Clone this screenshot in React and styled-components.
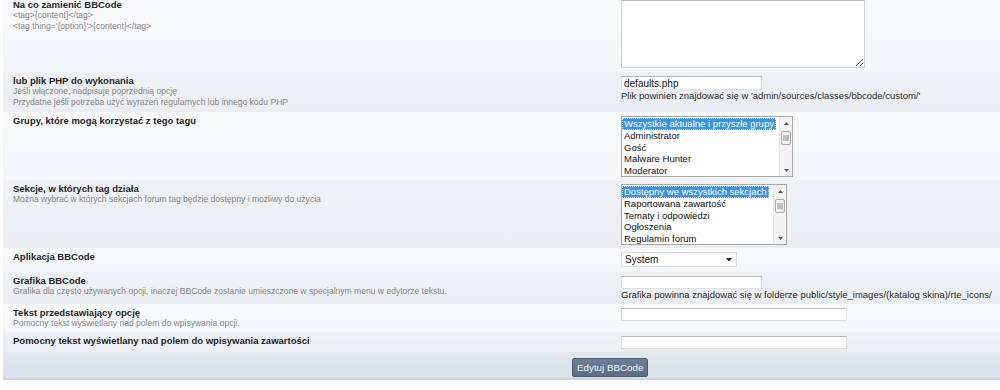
import styled, { createGlobalStyle } from "styled-components";

const GlobalStyle = createGlobalStyle`
  body {
    margin: 0;
    background: #ffffff;
    font-family: "Liberation Sans", Arial, sans-serif;
  }
`;

const Form = styled.div`
  margin-left: 3px;
  border-bottom: 2px solid #cdd5de;
`;

const Row = styled.div`
  display: grid;
  grid-template-columns: 618px 1fr;
  height: ${(p) => p.$h}px;
  padding-top: ${(p) => (p.$top !== undefined ? p.$top : 4)}px;
  box-sizing: border-box;
  background: ${(p) =>
    p.$alt
      ? "linear-gradient(#eef1f5, #eaeef3)"
      : "linear-gradient(#f8fafc, #f4f7fa)"};
  overflow: hidden;
`;

const Label = styled.div`
  padding-left: 10px;
`;

const Title = styled.div`
  font-size: 9.5px;
  line-height: 10px;
  font-weight: bold;
  color: #1f1f1f;
`;

const Desc = styled.div`
  font-size: 8.55px;
  line-height: 10.5px;
  color: #888888;
`;

const Value = styled.div`
  display: flex;
  flex-direction: column;
  align-items: flex-start;
`;

const TextArea = styled.textarea`
  width: 244px;
  height: 68px;
  box-sizing: border-box;
  border: 1px solid #d2d2d2;
  border-top-color: #b8b8b8;
  background: #ffffff;
  resize: both;
  margin: 0;
  padding: 2px;
  font-family: inherit;
  font-size: 10px;
`;

const TextInput = styled.input`
  width: ${(p) => p.$w}px;
  height: ${(p) => p.$h || 14}px;
  box-sizing: border-box;
  border: 1px solid #dedede;
  border-top-color: #b9b9b9;
  background: #ffffff;
  margin: 0;
  padding: 0 2px;
  font-family: inherit;
  font-size: 10px;
  color: #111;
  outline: none;
`;

const Hint = styled.div`
  font-size: 9.5px;
  line-height: 11px;
  color: #2b2b2b;
  white-space: nowrap;
`;

const ListBox = styled.div`
  width: ${(p) => p.$w}px;
  height: 61px;
  box-sizing: border-box;
  border: 1px solid #a9a9a9;
  background: #ffffff;
  display: flex;
`;

const Options = styled.div`
  flex: 1;
  padding-top: 1px;
  display: flex;
  flex-direction: column;
  align-items: flex-start;
  min-width: 0;
`;

const Option = styled.div`
  height: 11.8px;
  line-height: 11.8px;
  font-size: 9.5px;
  padding: 0 2px;
  white-space: nowrap;
  color: ${(p) => (p.$selected ? "#ffffff" : "#111111")};
  background: ${(p) => (p.$selected ? "#3b93e6" : "transparent")};
  outline: ${(p) => (p.$selected ? "1px dotted #cfe3f7" : "none")};
  outline-offset: -1px;
`;

const ScrollBar = styled.div`
  width: 12px;
  background: #f3f3f3;
  border-left: 1px solid #e4e4e4;
  display: flex;
  flex-direction: column;
  align-items: center;
`;

const Arrow = styled.div`
  height: 12px;
  width: 100%;
  display: flex;
  align-items: center;
  justify-content: center;
`;

const Track = styled.div`
  flex: 1;
  width: 100%;
  display: flex;
  justify-content: center;
`;

const Thumb = styled.div`
  margin-top: 2px;
  width: 8px;
  height: 12px;
  border: 1px solid #ababab;
  border-radius: 2px;
  background: linear-gradient(90deg, #fbfbfb, #e8e8e8);
  display: flex;
  align-items: center;
  justify-content: center;
`;

const DropSelect = styled.div`
  width: 116px;
  height: 15px;
  box-sizing: border-box;
  border: 1px solid #dadada;
  background: #ffffff;
  display: flex;
  align-items: center;
  justify-content: space-between;
  padding: 0 4px 0 3px;
  font-size: 10px;
  color: #111;
`;

const Footer = styled.div`
  height: 26px;
  box-sizing: border-box;
  padding: 5px 0 0 569px;
  background: linear-gradient(#e2e8ee, #d9e0e8);
`;

const Button = styled.button`
  height: 19px;
  padding: 0 4px;
  border: 1px solid #4c5d72;
  border-radius: 2px;
  background: linear-gradient(#6b7f97, #5b6e86);
  color: #eef2f6;
  font-family: inherit;
  font-size: 9.8px;
  line-height: 17px;
  margin: 0;
`;

const Tri = ({ up, size = 5, color = "#5a5a5a" }) => (
  <svg width={size} height={size * 0.6} viewBox="0 0 10 6">
    <path d={up ? "M0 6 L5 0 L10 6 Z" : "M0 0 L5 6 L10 0 Z"} fill={color} />
  </svg>
);

const Grip = () => (
  <svg width="6" height="6" viewBox="0 0 6 6">
    <path d="M0 1 H6 M0 3 H6 M0 5 H6" stroke="#8c8c8c" strokeWidth="1" />
  </svg>
);

const MultiList = ({ width, items }) => (
  <ListBox $w={width}>
    <Options>
      {items.map((it, i) => (
        <Option key={it} $selected={i === 0}>
          {it}
        </Option>
      ))}
    </Options>
    <ScrollBar>
      <Arrow>
        <Tri up />
      </Arrow>
      <Track>
        <Thumb>
          <Grip />
        </Thumb>
      </Track>
      <Arrow>
        <Tri />
      </Arrow>
    </ScrollBar>
  </ListBox>
);

const groups = [
  "Wszystkie aktualne i przyszłe grupy",
  "Administrator",
  "Gość",
  "Malware Hunter",
  "Moderator",
];

const sections = [
  "Dostępny we wszystkich sekcjach",
  "Raportowana zawartość",
  "Tematy i odpowiedzi",
  "Ogłoszenia",
  "Regulamin forum",
];

export default function App() {
  return (
    <>
      <GlobalStyle />
      <Form>
        <Row $h={72} $top={0}>
          <Label>
            <Title>Na co zamienić BBCode</Title>
            <Desc>{"<tag>{content}</tag>"}</Desc>
            <Desc>{"<tag thing='{option}'>{content}</tag>"}</Desc>
          </Label>
          <Value>
            <TextArea />
          </Value>
        </Row>

        <Row $h={40} $alt>
          <Label>
            <Title>lub plik PHP do wykonania</Title>
            <Desc>Jeśli włączone, nadpisuje poprzednią opcję</Desc>
            <Desc>
              Przydatne jeśli potrzeba użyć wyrażeń regularnych lub innego kodu
              PHP
            </Desc>
          </Label>
          <Value>
            <TextInput $w={141} defaultValue="defaults.php" />
            <Hint>
              Plik powinien znajdować się w
              'admin/sources/classes/bbcode/custom/'
            </Hint>
          </Value>
        </Row>

        <Row $h={68}>
          <Label>
            <Title>Grupy, które mogą korzystać z tego tagu</Title>
          </Label>
          <Value>
            <MultiList width={172} items={groups} />
          </Value>
        </Row>

        <Row $h={68} $alt>
          <Label>
            <Title>Sekcje, w których tag działa</Title>
            <Desc>
              Można wybrać w których sekcjach forum tag będzie dostępny i
              możliwy do użycia
            </Desc>
          </Label>
          <Value>
            <MultiList width={166} items={sections} />
          </Value>
        </Row>

        <Row $h={24}>
          <Label>
            <Title>Aplikacja BBCode</Title>
          </Label>
          <Value>
            <DropSelect>
              <span>System</span>
              <Tri size={6} color="#222" />
            </DropSelect>
          </Value>
        </Row>

        <Row $h={32} $alt>
          <Label>
            <Title>Grafika BBCode</Title>
            <Desc>
              Grafika dla często używanych opcji, inaczej BBCode zostanie
              umieszczone w specjalnym menu w edytorze tekstu.
            </Desc>
          </Label>
          <Value>
            <TextInput $w={141} $h={13} />
            <Hint>
              Grafika powinna znajdować się w folderze
              public/style_images/(katalog skina)/rte_icons/
            </Hint>
          </Value>
        </Row>

        <Row $h={28}>
          <Label>
            <Title>Tekst przedstawiający opcję</Title>
            <Desc>Pomocny tekst wyświetlany nad polem do wpisywania opcji.</Desc>
          </Label>
          <Value>
            <TextInput $w={226} $h={13} />
          </Value>
        </Row>

        <Row $h={20} $alt>
          <Label>
            <Title>Pomocny tekst wyświetlany nad polem do wpisywania zawartości</Title>
          </Label>
          <Value>
            <TextInput $w={226} $h={13} />
          </Value>
        </Row>

        <Footer>
          <Button>Edytuj BBCode</Button>
        </Footer>
      </Form>
    </>
  );
}
